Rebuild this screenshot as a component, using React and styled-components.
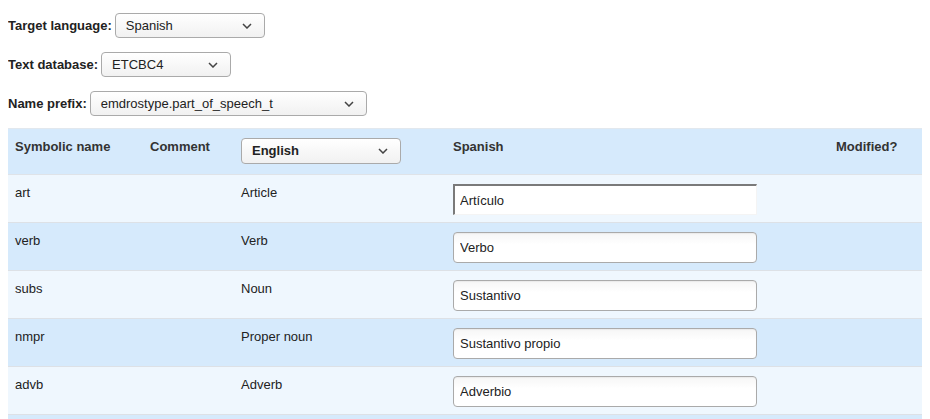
import styled, { createGlobalStyle } from 'styled-components'

const GlobalStyle = createGlobalStyle`
  body {
    margin: 8px;
    font-family: "Liberation Sans", Arial, sans-serif;
    font-size: 13px;
    color: #222;
    background: #fff;
  }
`

const rows = [
  { name: 'art', en: 'Article', es: 'Artículo', plain: true },
  { name: 'verb', en: 'Verb', es: 'Verbo' },
  { name: 'subs', en: 'Noun', es: 'Sustantivo' },
  { name: 'nmpr', en: 'Proper noun', es: 'Sustantivo propio' },
  { name: 'advb', en: 'Adverb', es: 'Adverbio' },
  { name: 'prep', en: 'Preposition', es: 'Preposición' },
]

function Chevron() {
  return (
    <svg width="10" height="6" viewBox="0 0 10 6">
      <path d="M1 1l4 4 4-4" fill="none" stroke="#444" strokeWidth="1.5" />
    </svg>
  )
}

function Select({ value, width, height = 25, bold }) {
  return (
    <SelectBox $width={width} $height={height} $bold={bold}>
      <span>{value}</span>
      <Chevron />
    </SelectBox>
  )
}

export default function App() {
  return (
    <>
      <GlobalStyle />
      <FieldRow>
        <Label>Target language:</Label>
        <Select value="Spanish" width={150} />
      </FieldRow>
      <FieldRow>
        <Label>Text database:</Label>
        <Select value="ETCBC4" width={130} />
      </FieldRow>
      <FieldRow $last>
        <Label>Name prefix:</Label>
        <Select value="emdrostype.part_of_speech_t" width={277} />
      </FieldRow>
      <Table>
        <colgroup>
          <col style={{ width: 135 }} />
          <col style={{ width: 91 }} />
          <col style={{ width: 212 }} />
          <col style={{ width: 383 }} />
          <col />
        </colgroup>
        <thead>
          <HeadRow>
            <Th>Symbolic name</Th>
            <Th>Comment</Th>
            <Th>
              <HeadSelect>
                <Select value="English" width={160} height={26} bold />
              </HeadSelect>
            </Th>
            <Th>Spanish</Th>
            <Th>Modified?</Th>
          </HeadRow>
        </thead>
        <tbody>
          {rows.map((r, i) => (
            <Row key={r.name} $odd={i % 2 === 1}>
              <Td>{r.name}</Td>
              <Td></Td>
              <Td>{r.en}</Td>
              <InputCell>
                <TextInput $plain={r.plain} defaultValue={r.es} />
              </InputCell>
              <Td></Td>
            </Row>
          ))}
        </tbody>
      </Table>
    </>
  )
}

const FieldRow = styled.div`
  display: flex;
  align-items: center;
  gap: 3px;
  height: 25px;
  margin: 5px 0 ${(p) => (p.$last ? 12 : 14)}px;
`

const Label = styled.label`
  font-weight: 700;
  color: #222;
`

const SelectBox = styled.div`
  position: relative;
  box-sizing: border-box;
  width: ${(p) => p.$width}px;
  height: ${(p) => p.$height}px;
  display: flex;
  align-items: center;
  justify-content: space-between;
  padding: 0 12px 0 10px;
  border: 1px solid #aaa;
  border-radius: 4px;
  background: linear-gradient(#fff, #f1f1f1);
  font-weight: ${(p) => (p.$bold ? 700 : 400)};
  color: #222;
`

const Table = styled.table`
  width: 915px;
  margin-left: -1px;
  border-collapse: collapse;
  table-layout: fixed;
`

const HeadRow = styled.tr`
  background: #d6eafc;
  border-top: 1px solid #e2e8ee;
  border-bottom: 1px solid #dfe3e8;
  height: 46px;
`

const Th = styled.th`
  text-align: left;
  vertical-align: top;
  padding: 8px 8px;
  line-height: 20px;
  font-weight: 700;
  color: #333;
`

const HeadSelect = styled.div`
  margin-top: 1px;
  display: flex;
`

const Row = styled.tr`
  background: ${(p) => (p.$odd ? '#d6eafc' : '#eff7fe')};
  border-bottom: 1px solid #dde1e6;
`

const Td = styled.td`
  vertical-align: top;
  padding: 8px 8px;
  line-height: 20px;
  color: #222;
`

const InputCell = styled(Td)`
  padding: 9px 8px 7px;
`

const TextInput = styled.input`
  display: block;
  box-sizing: border-box;
  width: 304px;
  height: 31px;
  margin: 0;
  padding: 0 6px;
  font-family: "Liberation Sans", Arial, sans-serif;
  font-size: 13px;
  color: #222;
  outline: none;
  ${(p) =>
    p.$plain
      ? `
    padding-left: 5px;
    border-style: solid;
    border-width: 2px 1px 1px 2px;
    border-color: #7a7a7a #f4f4f4 #f4f4f4 #7a7a7a;
    background: #fff;
  `
      : `
    border: 1px solid #aaa;
    border-radius: 4px;
    background: linear-gradient(#f6f6f6, #fff 40%);
    box-shadow: inset 0 1px 1px rgba(0, 0, 0, 0.05);
  `}
`
